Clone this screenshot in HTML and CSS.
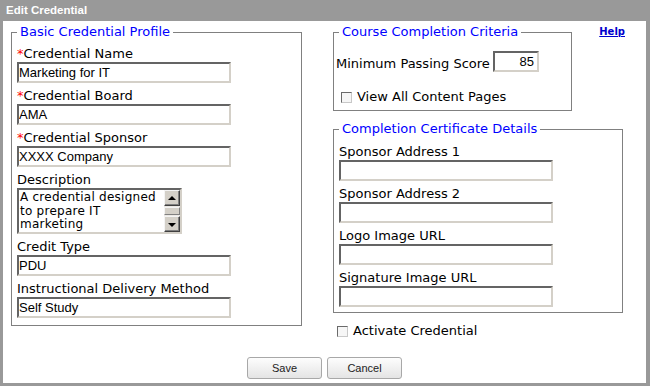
FILE: index.html
```html
<!DOCTYPE html>
<html>
<head>
<meta charset="utf-8">
<title>Edit Credential</title>
<link rel="stylesheet" href="styles.css">
</head>
<body>
<div class="window">
  <div class="titlebar">Edit Credential</div>
  <div class="panel">
    <div class="columns">
      <fieldset class="group group-profile">
        <legend>Basic Credential Profile</legend>
        <div class="field">
          <label class="label"><span class="req">*</span>Credential Name</label>
          <input class="textbox" type="text" value="Marketing for IT">
        </div>
        <div class="field">
          <label class="label"><span class="req">*</span>Credential Board</label>
          <input class="textbox" type="text" value="AMA">
        </div>
        <div class="field">
          <label class="label"><span class="req">*</span>Credential Sponsor</label>
          <input class="textbox" type="text" value="XXXX Company">
        </div>
        <div class="field">
          <label class="label">Description</label>
          <div class="textarea">
            <div class="ta-text">A credential designed to prepare IT marketing</div>
            <div class="scrollbar">
              <div class="sb-btn sb-up"></div>
              <div class="sb-track"><div class="sb-thumb"></div></div>
              <div class="sb-btn sb-down"></div>
            </div>
          </div>
        </div>
        <div class="field">
          <label class="label">Credit Type</label>
          <input class="textbox" type="text" value="PDU">
        </div>
        <div class="field">
          <label class="label">Instructional Delivery Method</label>
          <input class="textbox" type="text" value="Self Study">
        </div>
      </fieldset>

      <div class="right">
        <div class="right-top">
          <fieldset class="group group-criteria">
            <legend>Course Completion Criteria</legend>
            <div class="score-row">
              <label class="label">Minimum Passing Score</label>
              <input class="textbox score" type="text" value="85">
            </div>
            <label class="check-row view-row"><input class="check" type="checkbox">View All Content Pages</label>
          </fieldset>
          <a class="help" href="#">Help</a>
        </div>
        <fieldset class="group group-cert">
          <legend>Completion Certificate Details</legend>
          <div class="field">
            <label class="label">Sponsor Address 1</label>
            <input class="textbox" type="text" value="">
          </div>
          <div class="field">
            <label class="label">Sponsor Address 2</label>
            <input class="textbox" type="text" value="">
          </div>
          <div class="field">
            <label class="label">Logo Image URL</label>
            <input class="textbox" type="text" value="">
          </div>
          <div class="field">
            <label class="label">Signature Image URL</label>
            <input class="textbox" type="text" value="">
          </div>
        </fieldset>
        <label class="check-row activate-row"><input class="check" type="checkbox">Activate Credential</label>
      </div>
    </div>
    <div class="actions">
      <button class="btn" type="button">Save</button>
      <button class="btn" type="button">Cancel</button>
    </div>
  </div>
</div>
</body>
</html>
```
FILE: styles.css
```css
* { box-sizing: border-box; }

body {
  margin: 0;
  font-family: "DejaVu Sans", Verdana, sans-serif;
  color: #000;
}

.window {
  width: 650px;
  height: 386px;
  background: #999999;
  display: flex;
  flex-direction: column;
}

.titlebar {
  height: 21px;
  line-height: 21px;
  padding-left: 6px;
  color: #ffffff;
  font-family: "Liberation Sans", Arial, sans-serif;
  font-weight: bold;
  font-size: 11.5px;
}

.panel {
  flex: 1;
  background: #ffffff;
  margin: 0 4px 3px 3px;
  padding-top: 3px;
  display: flex;
  flex-direction: column;
}

.columns {
  display: flex;
  align-items: flex-start;
  gap: 31px;
  padding-left: 8px;
}

.group {
  margin: 0;
  border: 1px solid #808080;
  min-width: 0;
}

.group legend {
  padding: 0 3px;
  color: #0000ff;
  font-size: 13px;
  line-height: 16px;
}

.group-profile {
  width: 291px;
  padding: 5px 5px 7px 5px;
}

.field + .field { margin-top: 4px; }

.label {
  display: block;
  font-size: 13px;
  line-height: 17px;
  white-space: nowrap;
}

.req { color: #ff0000; }

.textbox {
  display: block;
  width: 214px;
  height: 21px;
  margin: 0;
  padding: 0;
  border: 2px solid;
  border-color: #646464 #d4d0c8 #d4d0c8 #646464;
  background: #ffffff;
  color: #000;
  font-family: "Liberation Sans", Arial, sans-serif;
  font-size: 13px;
  line-height: 17px;
  outline: none;
}

.textarea {
  display: flex;
  width: 165px;
  height: 46px;
  border: 2px solid;
  border-color: #646464 #d4d0c8 #d4d0c8 #646464;
  background: #fff;
}

.ta-text {
  flex: 1;
  min-width: 0;
  padding: 1px 0 0 1px;
  font-size: 12px;
  line-height: 13.5px;
  letter-spacing: 0.25px;
  overflow: hidden;
}

.scrollbar {
  width: 16px;
  display: flex;
  flex-direction: column;
  background: #ece9e4;
}

.sb-btn {
  height: 16px;
  background: #d4d0c8;
  border: 1px solid;
  border-color: #f4f4f4 #404040 #404040 #f4f4f4;
  box-shadow: inset -1px -1px 0 #808080;
  display: flex;
  align-items: center;
  justify-content: center;
}

.sb-up::before,
.sb-down::before {
  content: "";
  width: 0;
  height: 0;
  border-left: 4px solid transparent;
  border-right: 4px solid transparent;
}

.sb-up::before { border-bottom: 4px solid #000; margin-top: -1px; }
.sb-down::before { border-top: 4px solid #000; margin-bottom: -1px; }

.sb-track {
  flex: 1;
  padding: 1px 0;
}

.sb-thumb {
  height: 100%;
  background: #d4d0c8;
  border: 1px solid;
  border-color: #f4f4f4 #808080 #808080 #f4f4f4;
}

.right {
  width: 292px;
  display: flex;
  flex-direction: column;
}

.right-top {
  display: flex;
  justify-content: space-between;
  align-items: flex-start;
}

.group-criteria {
  width: 239px;
  padding: 11px 32px 5px 2px;
}

.group-criteria legend { margin-left: 3px; }

.score-row {
  display: flex;
  align-items: flex-end;
}

.textbox.score {
  width: 46px;
  margin-left: auto;
  padding-right: 3px;
  text-align: right;
}

.check-row {
  display: flex;
  align-items: center;
  gap: 5px;
  font-size: 13px;
  line-height: 16px;
  white-space: nowrap;
}

.view-row {
  margin-top: 17px;
  padding-left: 5px;
}

.check {
  -webkit-appearance: none;
  appearance: none;
  flex: none;
  width: 11px;
  height: 11px;
  margin: 0;
  border: 1px solid;
  border-color: #6a6a6a #c8c8c8 #c8c8c8 #6a6a6a;
  background: #f6f6f6;
}

.help {
  margin-top: 1px;
  color: #0000cc;
  font-weight: bold;
  font-size: 10px;
  line-height: 13px;
  text-decoration: underline;
}

.group-cert {
  width: 290px;
  margin-top: 10px;
  padding: 6px 5px 5px 5px;
}

.activate-row {
  margin-top: 10px;
  padding-left: 4px;
}

.actions {
  display: flex;
  justify-content: center;
  gap: 5px;
  margin-top: 18px;
}

.btn {
  width: 75px;
  height: 22px;
  margin: 0;
  padding: 0;
  border: 1px solid #a8a8a8;
  border-radius: 3px;
  background: linear-gradient(#fdfdfd, #e4e4e4);
  color: #222;
  font-family: "Liberation Sans", Arial, sans-serif;
  font-size: 11px;
}
```
